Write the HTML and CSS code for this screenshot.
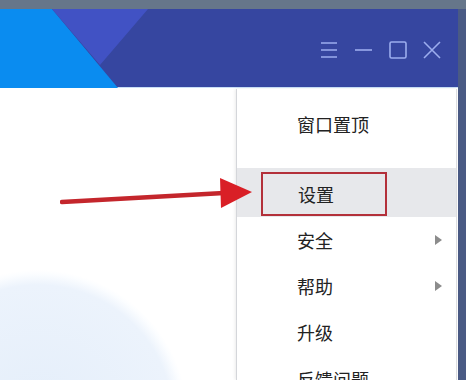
FILE: index.html
```html
<!DOCTYPE html>
<html lang="zh-CN">
<head>
<meta charset="utf-8">
<title>菜单</title>
<link rel="stylesheet" href="styles.css">
</head>
<body>
<div class="screen">
  <div class="window">
    <header class="titlebar">
      <svg class="deco" width="458" height="79" viewBox="0 0 458 79" aria-hidden="true">
        <polygon points="0,0 52,0 118,79 0,79" fill="#0a8cf0"/>
        <polygon points="52,0 148,0 100,56" fill="#4152c4"/>
      </svg>
      <div class="controls">
        <svg class="ctl" width="18" height="18" viewBox="0 0 18 18"><path d="M1 2h16M1 9h16M1 16h16"/></svg>
        <svg class="ctl" width="19" height="18" viewBox="0 0 19 18"><path d="M1 9h17"/></svg>
        <svg class="ctl" width="18" height="18" viewBox="0 0 18 18"><rect x="1" y="1" width="16" height="16" rx="1.5"/></svg>
        <svg class="ctl" width="18" height="18" viewBox="0 0 18 18"><path d="M1 1l16 16M17 1L1 17"/></svg>
      </div>
    </header>
    <main class="content"></main>
  </div>

  <nav class="menu">
    <div class="item first">窗口置顶</div>
    <div class="item hover"><span class="mark">设置</span></div>
    <div class="item">安全<span class="sub"></span></div>
    <div class="item">帮助<span class="sub"></span></div>
    <div class="item">升级</div>
    <div class="item last">反馈问题</div>
  </nav>

  <svg class="arrow" width="200" height="40" viewBox="0 0 200 40" aria-hidden="true">
    <line x1="2" y1="32" x2="164" y2="23" stroke="#c4262c" stroke-width="4.5" stroke-linecap="round"/>
    <polygon points="160,8 192,22 161,38" fill="#d91f26"/>
  </svg>
</div>
</body>
</html>
```
FILE: styles.css
```css
html, body {
  margin: 0;
  padding: 0;
}
body {
  width: 466px;
  height: 380px;
  overflow: hidden;
  font-family: "Noto Sans CJK SC", "Noto Sans", sans-serif;
}
.screen {
  position: relative;
  width: 466px;
  height: 380px;
  overflow: hidden;
  box-sizing: border-box;
  padding-top: 9px;
  padding-right: 8px;
  background: linear-gradient(to bottom, #66768a 0, #66768a 9px, #4a5a84 9px);
  display: flex;
}
.window {
  flex: 1;
  display: flex;
  flex-direction: column;
}
.titlebar {
  position: relative;
  height: 79px;
  background: #3646a0;
  display: flex;
  justify-content: flex-end;
  align-items: flex-start;
  border-bottom: 1px solid #c9def6;
  box-sizing: border-box;
}
.deco {
  position: absolute;
  left: 0;
  top: 0;
}
.controls {
  position: relative;
  display: flex;
  gap: 16px;
  margin-top: 32px;
  margin-right: 17px;
}
.ctl {
  fill: none;
  stroke: #9cadee;
  stroke-width: 1.6;
}
.content {
  flex: 1;
  background:
    radial-gradient(circle at 38px 332px, #e4eefa 0, #ecf3fc 135px, #fbfdff 146px, rgba(255,255,255,0) 150px),
    #ffffff;
}
.menu {
  position: absolute;
  left: 236px;
  top: 89px;
  width: 221px;
  height: 291px;
  overflow: hidden;
  box-sizing: border-box;
  background: #ffffff;
  border-left: 1px solid #d4d6da;
  border-right: 1px solid #dcdde0;
  box-shadow: -1px 0 3px rgba(0,0,0,0.08);
  padding-top: 12px;
  display: flex;
  flex-direction: column;
}
.item {
  position: relative;
  height: 46px;
  flex: none;
  display: flex;
  align-items: center;
  padding-left: 60px;
  font-size: 18px;
  color: #222222;
}
.item.last {
  height: 26px;
  align-items: flex-start;
  padding-top: 11px;
  overflow: hidden;
}
.item.first {
  margin-bottom: 21px;
}
.item.hover {
  height: 49px;
  background: #e7e8eb;
  padding-left: 24px;
}
.mark {
  box-sizing: border-box;
  width: 126px;
  height: 44px;
  border: 2px solid #b3303a;
  padding-left: 35px;
  display: flex;
  align-items: center;
  margin-top: 2px;
}
.sub {
  position: absolute;
  right: 14px;
  top: 18px;
  width: 0;
  height: 0;
  border-left: 7px solid #8c8c8c;
  border-top: 5.5px solid transparent;
  border-bottom: 5.5px solid transparent;
}
.arrow {
  position: absolute;
  left: 60px;
  top: 170px;
}
```
